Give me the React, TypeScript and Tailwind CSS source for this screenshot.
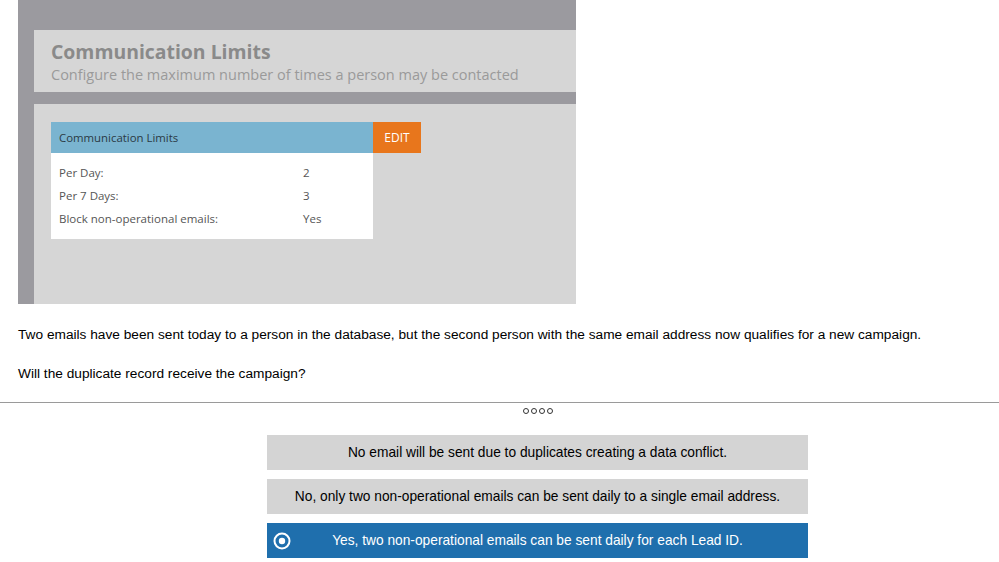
const rows = [
  { label: "Per Day:", value: "2" },
  { label: "Per 7 Days:", value: "3" },
  { label: "Block non-operational emails:", value: "Yes" },
];

const options = [
  { text: "No email will be sent due to duplicates creating a data conflict.", selected: false },
  { text: "No, only two non-operational emails can be sent daily to a single email address.", selected: false },
  { text: "Yes, two non-operational emails can be sent daily for each Lead ID.", selected: true },
];

function Screenshot() {
  return (
    <div className="ml-[18px] w-[558px] h-[304px] bg-[#9b9a9f] pt-[30px] pl-[16px] flex flex-col font-['Open_Sans',sans-serif]">
      <div className="h-[62px] bg-[#d6d6d6] px-[17px] pt-[9px]">
        <div className="text-[19.4px] leading-[26px] font-bold text-[#8a8a8a]">Communication Limits</div>
        <div className="text-[14.5px] leading-[20px] text-[#9a9a9a]">
          Configure the maximum number of times a person may be contacted
        </div>
      </div>
      <div className="h-[12px]" />
      <div className="flex-1 bg-[#d6d6d6] pl-[17px] pt-[18px]">
        <div className="flex">
          <div className="w-[322px]">
            <div className="h-[31px] bg-[#7ab4d0] flex items-center px-[8px] text-[11.4px] text-[#2b3a44]">
              Communication Limits
            </div>
            <div className="bg-white pt-[8px] pb-[9px] px-[8px]">
              {rows.map((r) => (
                <div key={r.label} className="flex h-[23px] items-center text-[11.5px] text-[#555]">
                  <span className="w-[244px]">{r.label}</span>
                  <span>{r.value}</span>
                </div>
              ))}
            </div>
          </div>
          <div className="w-[48px] h-[31px] bg-[#e8761c] text-white text-[12px] flex items-center justify-center">
            EDIT
          </div>
        </div>
      </div>
    </div>
  );
}

function RadioIcon() {
  return (
    <svg width="18" height="18" viewBox="0 0 18 18" className="absolute left-[6px] top-1/2 -translate-y-1/2">
      <circle cx="9" cy="9" r="7.5" fill="none" stroke="white" strokeWidth="2" />
      <circle cx="9" cy="9" r="3.2" fill="white" />
    </svg>
  );
}

export default function App() {
  return (
    <div className="w-[999px] h-[562px] bg-white font-['Liberation_Sans',Arial,sans-serif] overflow-hidden">
      <Screenshot />
      <p className="mt-[21px] ml-[18px] text-[13.7px] leading-[20px] text-black">
        Two emails have been sent today to a person in the database, but the second person with the same email address now qualifies for a new campaign.
      </p>
      <p className="mt-[19px] ml-[18px] text-[13.7px] leading-[20px] text-black">
        Will the duplicate record receive the campaign?
      </p>
      <div className="mt-[18px] h-px bg-[#9a9a9a]" />
      <div className="flex justify-center gap-[2px] mt-[5px] pl-[76px]">
        {[0, 1, 2, 3].map((i) => (
          <span key={i} className="w-[6px] h-[6px] rounded-full border border-[#333]" />
        ))}
      </div>
      <div className="mt-[21px] ml-[267px] w-[541px] flex flex-col gap-[9px]">
        {options.map((o) => (
          <div
            key={o.text}
            className={`relative h-[35px] pt-[2px] flex items-center justify-center text-[13.75px] ${
              o.selected ? "bg-[#1f6fad] text-white" : "bg-[#d4d4d4] text-black"
            }`}
          >
            {o.selected && <RadioIcon />}
            {o.text}
          </div>
        ))}
      </div>
    </div>
  );
}
